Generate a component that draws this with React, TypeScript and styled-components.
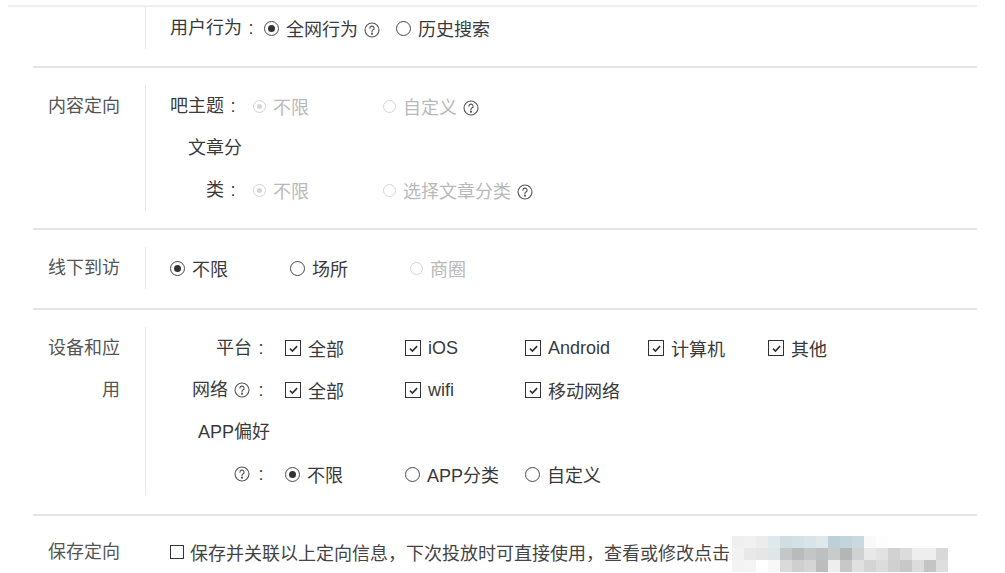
import React from 'react'
import styled, { createGlobalStyle } from 'styled-components'

const GlobalStyle = createGlobalStyle`
  html, body {
    margin: 0;
    background: #fff;
  }
  body {
    font-family: "Liberation Sans", "Noto Sans CJK SC", sans-serif;
    font-size: 18px;
    color: #3a3a3a;
    overflow: hidden;
  }
`

const Page = styled.div`
  width: 1005px;
  height: 573px;
  overflow: hidden;
`

const TopRule = styled.div`
  margin: 5px 0 0 8px;
  width: 969px;
  height: 2px;
  background: #efefef;
`

const Section = styled.section<{ $pt?: number; $pb?: number; $last?: boolean }>`
  display: flex;
  margin-left: 33px;
  width: 944px;
  padding: ${p => p.$pt ?? 17}px 0 ${p => p.$pb ?? 17}px;
  border-bottom: ${p => (p.$last ? 'none' : '2px solid #e4e4e4')};
`

const Label = styled.div`
  flex-shrink: 0;
  width: 73px;
  margin: 0 25px 0 14px;
  line-height: 42px;
  text-align: right;
  color: #555;
`

const Content = styled.div<{ $plain?: boolean }>`
  flex: 1;
  padding-left: 24px;
  border-left: 1px solid ${p => (p.$plain ? 'transparent' : '#e6e6e6')};
`

const Row = styled.div`
  display: flex;
  align-items: flex-end;
`

const SubLabel = styled.div<{ $w?: number }>`
  flex-shrink: 0;
  width: ${p => (p.$w ? `${p.$w}px` : 'auto')};
  line-height: 42px;
  text-align: right;
`

const Keep = styled.span`
  white-space: nowrap;
`

const Colon = styled.span`
  display: inline-block;
  width: 18px;
  text-align: center;
`

const Options = styled.div<{ $gap: number }>`
  display: flex;
  margin-left: ${p => p.$gap}px;
`

const Option = styled.label<{ $w: number; $disabled?: boolean }>`
  display: flex;
  align-items: center;
  gap: 7px;
  width: ${p => p.$w}px;
  height: 42px;
  white-space: nowrap;
  color: ${p => (p.$disabled ? '#b9b9b9' : 'inherit')};
`

const Radio = styled.span<{ $checked?: boolean; $disabled?: boolean }>`
  box-sizing: border-box;
  display: inline-flex;
  align-items: center;
  justify-content: center;
  flex-shrink: 0;
  width: ${p => (p.$disabled ? 13 : 15)}px;
  height: ${p => (p.$disabled ? 13 : 15)}px;
  border-radius: 50%;
  border: 1px solid ${p => (p.$disabled ? '#d6d6d6' : '#4a4a4a')};
  &::after {
    content: '';
    display: ${p => (p.$checked ? 'block' : 'none')};
    width: ${p => (p.$disabled ? 5 : 7)}px;
    height: ${p => (p.$disabled ? 5 : 7)}px;
    border-radius: 50%;
    background: ${p => (p.$disabled ? '#d6d6d6' : '#333')};
  }
`

const Box = styled.span<{ $size?: number }>`
  box-sizing: border-box;
  display: inline-flex;
  align-items: center;
  justify-content: center;
  flex-shrink: 0;
  width: ${p => p.$size ?? 16}px;
  height: ${p => p.$size ?? 16}px;
  border: 1.5px solid #333;
  background: #fff;
`

const HelpIcon = styled.svg`
  flex-shrink: 0;
  margin: 0 2px 0 6px;
  vertical-align: -2px;
`

const SaveRow = styled.div`
  display: flex;
  align-items: center;
  gap: 6px;
  height: 42px;
  color: #444;
  white-space: nowrap;
`

const Mosaic = styled.svg`
  flex-shrink: 0;
  align-self: flex-start;
  margin: 5px 0 0 -4px;
`

function Help() {
  return (
    <HelpIcon width="16" height="16" viewBox="0 0 16 16" fill="none" stroke="#555" strokeWidth="1.1">
      <circle cx="8" cy="8" r="7" />
      <path d="M5.9 6.2a2.1 2.1 0 1 1 3 1.9c-.6.3-.9.7-.9 1.3v.6" strokeLinecap="round" />
      <circle cx="8" cy="11.7" r="0.5" fill="#555" />
    </HelpIcon>
  )
}

function Check({ size }: { size?: number }) {
  return (
    <Box $size={size}>
      {size ? null : (
        <svg width="11" height="11" viewBox="0 0 10 10" fill="none" stroke="#333" strokeWidth="1.5">
          <path d="M1.8 5.2 4 7.3 8.3 2.8" />
        </svg>
      )}
    </Box>
  )
}

const mosaicRows = [
  ['#efefef', '#f1f1f1', '#ececec', '#dfe8ea', '#d0dde2', '#d3e0e4', '#d8e4e7', '#dfe8ea', '#bcd0d8', '#c2d4dc', '#c9d9de', '#f9f9f9', '#fdfdfd', '#fff', '#fff', '#fff', '#fff', '#fff'],
  ['#f2f2f2', '#e8e8e8', '#e6e6e6', '#dfe6e8', '#c4c6c7', '#b8bbbc', '#c3c6c7', '#bcc0c1', '#c8cbcc', '#b3b6b7', '#cfd1d2', '#e8e8e8', '#e2e2e2', '#d2d2d2', '#dcdcdc', '#eeeeee', '#eeeeee', '#d8d8d8'],
  ['#f3f3f3', '#f5f5f5', '#fff', '#f8f8f8', '#dadada', '#cfcfcf', '#d5d5d5', '#bdbdbd', '#eeeeee', '#c8c8c8', '#e0e0e0', '#d4d4d4', '#dcdcdc', '#d0d0d0', '#c8c8c8', '#dcdcdc', '#c4c4c4', '#dedede'],
]

function Blur() {
  return (
    <Mosaic width="216" height="36" viewBox="0 0 216 36">
      {mosaicRows.map((row, r) =>
        row.map((c, i) => <rect key={`${r}-${i}`} x={i * 12} y={r * 12} width="12" height="12" fill={c} />)
      )}
    </Mosaic>
  )
}

const platforms = ['全部', 'iOS', 'Android', '计算机', '其他']
const networks = ['全部', 'wifi', '移动网络']

export default function App() {
  return (
    <Page>
      <GlobalStyle />
      <TopRule />

      <Section $pt={0}>
        <Label />
        <Content>
          <Row>
            <SubLabel>
              用户行为<Colon>:</Colon>
            </SubLabel>
            <Options $gap={4}>
              <Option $w={132}>
                <Radio $checked />
                <span>
                  全网行为
                  <Help />
                </span>
              </Option>
              <Option $w={130}>
                <Radio />
                历史搜索
              </Option>
            </Options>
          </Row>
        </Content>
      </Section>

      <Section>
        <Label>内容定向</Label>
        <Content>
          <Row>
            <SubLabel $w={72}>
              吧主题<Colon>:</Colon>
            </SubLabel>
            <Options $gap={11}>
              <Option $w={130} $disabled>
                <Radio $checked $disabled />
                不限
              </Option>
              <Option $w={130} $disabled>
                <Radio $disabled />
                <span>
                  自定义
                  <Help />
                </span>
              </Option>
            </Options>
          </Row>
          <Row>
            <SubLabel $w={72}>
              文章分
              <Keep>
                类<Colon>:</Colon>
              </Keep>
            </SubLabel>
            <Options $gap={11}>
              <Option $w={130} $disabled>
                <Radio $checked $disabled />
                不限
              </Option>
              <Option $w={160} $disabled>
                <Radio $disabled />
                <span>
                  选择文章分类
                  <Help />
                </span>
              </Option>
            </Options>
          </Row>
        </Content>
      </Section>

      <Section $pb={19}>
        <Label>线下到访</Label>
        <Content>
          <Row>
            <Options $gap={0}>
              <Option $w={120}>
                <Radio $checked />
                不限
              </Option>
              <Option $w={120}>
                <Radio />
                场所
              </Option>
              <Option $w={120} $disabled>
                <Radio $disabled />
                商圈
              </Option>
            </Options>
          </Row>
        </Content>
      </Section>

      <Section $pb={19}>
        <Label>设备和应用</Label>
        <Content>
          <Row>
            <SubLabel $w={100}>
              平台<Colon>:</Colon>
            </SubLabel>
            <Options $gap={15}>
              {platforms.map(p => (
                <Option key={p} $w={p === 'Android' ? 123 : 120}>
                  <Check />
                  {p}
                </Option>
              ))}
            </Options>
          </Row>
          <Row>
            <SubLabel $w={100}>
              <Keep>
                网络
                <Help />
                <Colon>:</Colon>
              </Keep>
            </SubLabel>
            <Options $gap={15}>
              {networks.map(n => (
                <Option key={n} $w={120}>
                  <Check />
                  {n}
                </Option>
              ))}
            </Options>
          </Row>
          <Row>
            <SubLabel $w={100}>
              APP偏好
              <br />
              <Keep>
                <Help />
                <Colon>:</Colon>
              </Keep>
            </SubLabel>
            <Options $gap={15}>
              <Option $w={120}>
                <Radio $checked />
                不限
              </Option>
              <Option $w={120}>
                <Radio />
                APP分类
              </Option>
              <Option $w={120}>
                <Radio />
                自定义
              </Option>
            </Options>
          </Row>
        </Content>
      </Section>

      <Section $pt={15} $last>
        <Label>保存定向</Label>
        <Content $plain>
          <SaveRow>
            <Check size={14} />
            保存并关联以上定向信息，下次投放时可直接使用，查看或修改点击
            <Blur />
          </SaveRow>
        </Content>
      </Section>
    </Page>
  )
}
